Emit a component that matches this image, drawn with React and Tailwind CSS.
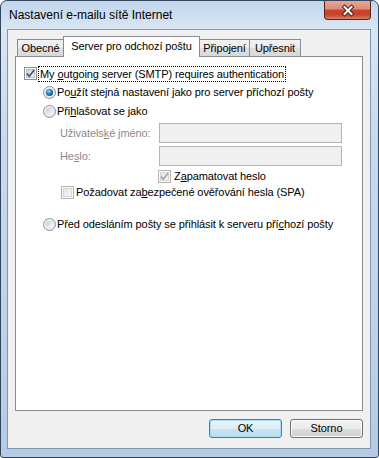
import React from "react";

function Defs() {
  return (
    <svg width="0" height="0" className="absolute">
      <defs>
        <linearGradient id="cbInner" x1="0" y1="0" x2="1" y2="1">
          <stop offset="0" stopColor="#cbd0d6" />
          <stop offset="1" stopColor="#f7f8f9" />
        </linearGradient>
        <linearGradient id="cbInnerDis" x1="0" y1="0" x2="1" y2="1">
          <stop offset="0" stopColor="#e2e2e2" />
          <stop offset="1" stopColor="#f9f9f9" />
        </linearGradient>
        <linearGradient id="rbOuter" x1="0" y1="0" x2="1" y2="1">
          <stop offset="0" stopColor="#f4f4f4" />
          <stop offset="1" stopColor="#e2e4e6" />
        </linearGradient>
        <linearGradient id="rbInner" x1="0" y1="0" x2="1" y2="1">
          <stop offset="0" stopColor="#c9cdd2" />
          <stop offset="1" stopColor="#fbfbfb" />
        </linearGradient>
        <radialGradient id="rbDot" cx="0.4" cy="0.35" r="0.7">
          <stop offset="0" stopColor="#8fe0fb" />
          <stop offset="0.45" stopColor="#2a8cc4" />
          <stop offset="1" stopColor="#17496f" />
        </radialGradient>
      </defs>
    </svg>
  );
}

function Check({ checked, disabled }) {
  return (
    <svg width="13" height="13" viewBox="0 0 13 13" className="shrink-0 block">
      <rect x="0.5" y="0.5" width="12" height="12" fill="#fafafa" stroke={disabled ? "#b4b4b4" : "#8e8f8f"} />
      <rect x="2.5" y="2.5" width="8" height="8" fill={disabled ? "url(#cbInnerDis)" : "url(#cbInner)"} stroke={disabled ? "#d6d6d6" : "#b9bec4"} />
      {checked && (
        <path
          d="M3 6.6 L5.3 9.2 L10 3.3"
          fill="none"
          stroke={disabled ? "#a3a3a3" : "#3d5280"}
          strokeWidth="1.7"
        />
      )}
    </svg>
  );
}

function Radio({ checked }) {
  return (
    <svg width="13" height="13" viewBox="0 0 13 13" className="shrink-0 block">
      <circle cx="6.5" cy="6.5" r="6" fill="url(#rbOuter)" stroke="#8e9297" />
      <circle cx="6.5" cy="6.5" r="4" fill="url(#rbInner)" />
      {checked && <circle cx="6.5" cy="6.5" r="3.6" fill="url(#rbDot)" />}
    </svg>
  );
}

function U({ children }) {
  return <span className="underline underline-offset-[1px]">{children}</span>;
}

function Tab({ children, w, selected, first }) {
  if (selected) {
    return (
      <div
        className={`${w} -ml-px relative z-20 h-[21px] border border-b-0 border-[#898c95] bg-white flex items-start justify-center pt-[3px] text-black`}
      >
        {children}
      </div>
    );
  }
  return (
    <div
      className={`${w} ${first ? "" : "-ml-px"} h-[17px] mb-px border border-b-0 border-[#898c95] bg-[linear-gradient(#f2f2f2,#ebebeb_50%,#dfdfdf_50%,#d8d8d8)] flex items-center justify-center text-black`}
    >
      {children}
    </div>
  );
}

export default function App() {
  return (
    <div className="w-[379px] h-[458px] bg-white font-['Liberation_Sans',Arial,sans-serif] text-[11px] tracking-[-0.1px] leading-[13px] text-black">
      <Defs />
      <div className="relative w-[379px] h-[458px] flex flex-col border border-[#34465c] rounded-t-[7px] rounded-b-[3px] overflow-hidden bg-[linear-gradient(180deg,#c0d5ec_0%,#d9e6f3_6%,#c8daee_30%,#bed3ea_70%,#b4cbe5_100%)]">
        <div className="h-[28px] shrink-0 flex items-center pl-[8px] pt-[1px] text-[12px] tracking-normal text-black">
          Nastavení e-mailu sítě Internet
        </div>
        <div className="absolute top-0 right-[7px] w-[47px] h-[19px] rounded-b-[4px] border border-t-0 border-[#5a241a] bg-[linear-gradient(180deg,#e8a797_0%,#dc8a76_45%,#c8462d_50%,#c4442c_75%,#dc7d62_100%)] flex items-center justify-center">
          <svg width="16" height="13" viewBox="0 0 16 13">
            <path d="M4.5 3 L11.5 10 M11.5 3 L4.5 10" stroke="#4a2018" strokeWidth="4" strokeLinecap="square" />
            <path d="M4.5 3 L11.5 10 M11.5 3 L4.5 10" stroke="#ffffff" strokeWidth="2" strokeLinecap="square" />
          </svg>
        </div>
        <div className="flex-1 ml-[6px] mr-[7px] mb-[8px] border border-[#8396ae] bg-[#f0f0f0] flex flex-col">
          <div className="mt-[6px] ml-[9px] h-[21px] flex items-end relative z-10">
            <Tab w="w-[47px]" first>Obecné</Tab>
            <Tab w="w-[137px]" selected>Server pro odchozí poštu</Tab>
            <Tab w="w-[51px]">Připojení</Tab>
            <Tab w="w-[52px]">Upřesnit</Tab>
          </div>
          <div className="-mt-px ml-[7px] w-[348px] h-[355px] border border-[#898c95] bg-white flex flex-col">
            <div className="mt-[10px] ml-[8px] h-[13px] flex items-center">
              <Check checked />
              <span className="ml-px h-[16px] border border-dotted border-black px-px leading-[14px] whitespace-nowrap">
                My <U>o</U>utgoing server (SMTP) requires authentication
              </span>
            </div>
            <div className="mt-[6px] ml-[27px] h-[13px] flex items-center gap-px">
              <Radio checked />
              <span>
                Po<U>u</U>žít stejná nastavení jako pro server příchozí pošty
              </span>
            </div>
            <div className="mt-[6px] ml-[27px] h-[13px] flex items-center gap-px">
              <Radio />
              <span>
                Při<U>h</U>lašovat se jako
              </span>
            </div>
            <div className="mt-[5px] ml-[44px] h-[20px] flex items-center">
              <span className="w-[99px] text-[#8a8a8a]">
                Uživatels<U>k</U>é jméno:
              </span>
              <div className="w-[183px] h-[20px] border border-[#b2b5b8] bg-[#f0f0f0]" />
            </div>
            <div className="mt-[3px] ml-[44px] h-[20px] flex items-center">
              <span className="w-[99px] text-[#8a8a8a]">
                He<U>s</U>lo:
              </span>
              <div className="w-[183px] h-[20px] border border-[#b2b5b8] bg-[#f0f0f0]" />
            </div>
            <div className="mt-[4px] ml-[142px] h-[13px] flex items-center gap-[3px]">
              <Check checked disabled />
              <span>
                Z<U>a</U>pamatovat heslo
              </span>
            </div>
            <div className="mt-[3px] ml-[45px] h-[13px] flex items-center gap-[2px]">
              <Check disabled />
              <span>
                Požadovat za<U>b</U>ezpečené ověřování hesla (SPA)
              </span>
            </div>
            <div className="mt-[19px] ml-[27px] h-[13px] flex items-center gap-px">
              <Radio />
              <span>
                Před odesláním pošty se přihlásit k serveru pří<U>c</U>hozí pošty
              </span>
            </div>
          </div>
          <div className="mt-[8px] flex justify-end gap-[8px] mr-[7px]">
            <button className="w-[73px] h-[19px] rounded-[3px] border border-[#3c7fb1] shadow-[inset_0_0_0_1px_#a9dcf5] bg-[linear-gradient(#e8f4fb,#dcedf8_50%,#c7e3f4_50%,#bcdcf0)] text-[11px] leading-none text-black">
              OK
            </button>
            <button className="w-[73px] h-[19px] rounded-[3px] border border-[#707070] shadow-[inset_0_0_0_1px_#fbfbfb] bg-[linear-gradient(#f2f2f2,#ebebeb_50%,#dddddd_50%,#cfcfcf)] text-[11px] leading-none text-black">
              Storno
            </button>
          </div>
        </div>
      </div>
    </div>
  );
}
